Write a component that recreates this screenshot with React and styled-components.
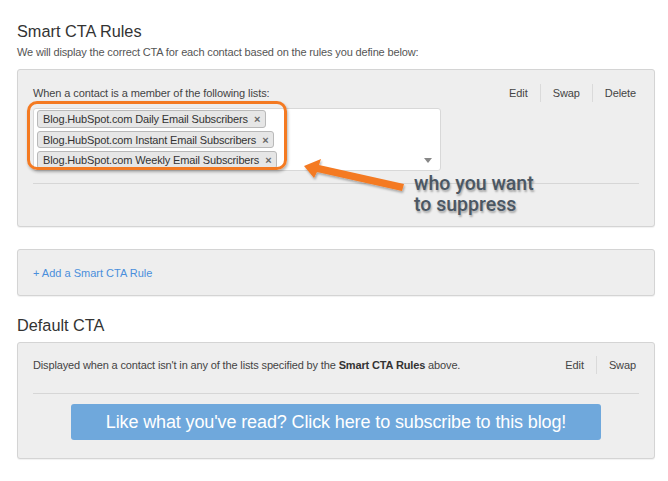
import React from "react";
import styled, { createGlobalStyle } from "styled-components";

const Global = createGlobalStyle`
  html, body {
    margin: 0;
    padding: 0;
    background: #fff;
  }
  body {
    font-family: "Liberation Sans", Arial, sans-serif;
    color: #333;
  }
`;

const lists = [
  "Blog.HubSpot.com Daily Email Subscribers",
  "Blog.HubSpot.com Instant Email Subscribers",
  "Blog.HubSpot.com Weekly Email Subscribers",
];

const App = () => {
  return (
    <Page>
      <Global />
      <Title>Smart CTA Rules</Title>
      <Intro>
        We will display the correct CTA for each contact based on the rules you
        define below:
      </Intro>

      <RulePanel>
        <Header>
          <Label>When a contact is a member of the following lists:</Label>
          <Actions>
            <Action>Edit</Action>
            <Action>Swap</Action>
            <Action>Delete</Action>
          </Actions>
        </Header>
        <Select>
          {lists.map((name) => (
            <Tag key={name}>
              {name}
              <Remove>×</Remove>
            </Tag>
          ))}
          <Caret />
        </Select>
        <Divider />
      </RulePanel>

      <AddPanel>
        <AddLink>+ Add a Smart CTA Rule</AddLink>
      </AddPanel>

      <SectionTitle>Default CTA</SectionTitle>
      <DefaultPanel>
        <Header>
          <Small>
            Displayed when a contact isn't in any of the lists specified by the{" "}
            <strong>Smart CTA Rules</strong> above.
          </Small>
          <Actions>
            <Action>Edit</Action>
            <Action>Swap</Action>
          </Actions>
        </Header>
        <Divider $gap={21} />
        <CtaButton>Like what you've read? Click here to subscribe to this blog!</CtaButton>
      </DefaultPanel>

      <Highlight />
      <Arrow width="110" height="40" viewBox="0 0 110 40">
        <defs>
          <filter id="sh" x="-20%" y="-40%" width="140%" height="180%">
            <feDropShadow dx="1" dy="2" stdDeviation="1.2" floodColor="#000" floodOpacity="0.3" />
          </filter>
        </defs>
        <g filter="url(#sh)" fill="#f47a22">
          <polygon points="3,8 20,1 18,7 103,26 101,33 16,14 13,20" />
        </g>
      </Arrow>
      <Note>
        <span>who you want</span>
        <span>to suppress</span>
      </Note>
    </Page>
  );
};

const Page = styled.div`
  position: relative;
  width: 638px;
  padding: 21px 13px 20px 17px;
`;

const Title = styled.h2`
  margin: 0;
  font-size: 16.3px;
  line-height: 20px;
  font-weight: normal;
  color: #333;
`;

const SectionTitle = styled(Title)`
  margin-top: 19px;
`;

const Intro = styled.p`
  margin: 4px 0 0;
  font-size: 11px;
  line-height: 14px;
  letter-spacing: -0.15px;
  color: #555;
`;

const Panel = styled.div`
  background: #eeeeee;
  border: 1px solid #d4d4d4;
  border-radius: 3px;
  box-shadow: 0 1px 1px rgba(0, 0, 0, 0.06);
  padding: 16px 15px;
`;

const RulePanel = styled(Panel)`
  margin-top: 10px;
  padding-bottom: 42px;
`;

const AddPanel = styled(Panel)`
  margin-top: 22px;
  padding: 16px 15px;
  height: 13px;
  display: flex;
  align-items: center;
`;

const DefaultPanel = styled(Panel)`
  margin-top: 7px;
  padding: 15px 15px 18px;
`;

const Header = styled.div`
  display: flex;
  justify-content: space-between;
  align-items: center;
  height: 14px;
`;

const Label = styled.span`
  font-size: 11px;
  letter-spacing: -0.1px;
  color: #444;
`;

const Small = styled.span`
  font-size: 11px;
  color: #444;
  letter-spacing: -0.14px;

  strong {
    font-weight: bold;
    color: #333;
  }
`;

const Actions = styled.div`
  display: flex;
  align-items: center;
  margin-right: 3px;
`;

const Action = styled.span`
  font-size: 11px;
  color: #444;
  padding: 2px 12px;
  border-left: 1px solid #dadada;
  line-height: 14px;
  letter-spacing: -0.1px;

  &:first-child {
    border-left: none;
  }
  &:last-child {
    padding-right: 0;
  }
`;

const Select = styled.div`
  position: relative;
  box-sizing: border-box;
  margin-top: 8px;
  width: 408px;
  height: 63px;
  background: #fff;
  border: 1px solid #d8d8d8;
  border-radius: 3px;
  padding: 1px 3px;
  display: flex;
  flex-direction: column;
  align-items: flex-start;
  gap: 3px;
`;

const Tag = styled.span`
  box-sizing: border-box;
  display: inline-flex;
  align-items: center;
  height: 18px;
  padding: 0 5px;
  background: #e6e6e6;
  border: 1px solid #b9b9b9;
  border-radius: 3px;
  font-size: 11px;
  letter-spacing: -0.15px;
  color: #333;
`;

const Remove = styled.span`
  margin-left: 6px;
  font-size: 11px;
  font-weight: bold;
  color: #666;
`;

const Caret = styled.span`
  position: absolute;
  right: 8px;
  bottom: 7px;
  width: 0;
  height: 0;
  border-left: 4px solid transparent;
  border-right: 4px solid transparent;
  border-top: 5px solid #888;
`;

const Divider = styled.hr`
  margin: ${(p) => (p.$gap ? `${p.$gap}px 0 0` : "12px 0 0")};
  border: none;
  border-top: 1px solid #d6d6d6;
  height: 0;
`;

const AddLink = styled.a`
  font-size: 11px;
  color: #4a8fdc;
  text-decoration: none;
`;

const CtaButton = styled.div`
  margin: 10px auto 0;
  width: 530px;
  height: 36px;
  border-radius: 3px;
  background: #6fa8dc;
  color: #fff;
  font-size: 18px;
  letter-spacing: -0.12px;
  display: flex;
  align-items: center;
  justify-content: center;
`;

const Highlight = styled.div`
  position: absolute;
  left: 27px;
  top: 101px;
  width: 254px;
  height: 63px;
  border: 3px solid #f47a22;
  border-radius: 10px;
  box-shadow: 1px 2px 3px rgba(0, 0, 0, 0.3);
  pointer-events: none;
`;

const Arrow = styled.svg`
  position: absolute;
  left: 301px;
  top: 158px;
`;

const Note = styled.div`
  position: absolute;
  left: 414px;
  top: 173px;
  display: flex;
  flex-direction: column;
  font-family: Roboto, "Liberation Sans", sans-serif;
  font-size: 19.5px;
  line-height: 21px;
  font-weight: 500;
  color: #4b5763;
  text-shadow: 1px 2px 2px rgba(0, 0, 0, 0.3);
`;

export default App;
